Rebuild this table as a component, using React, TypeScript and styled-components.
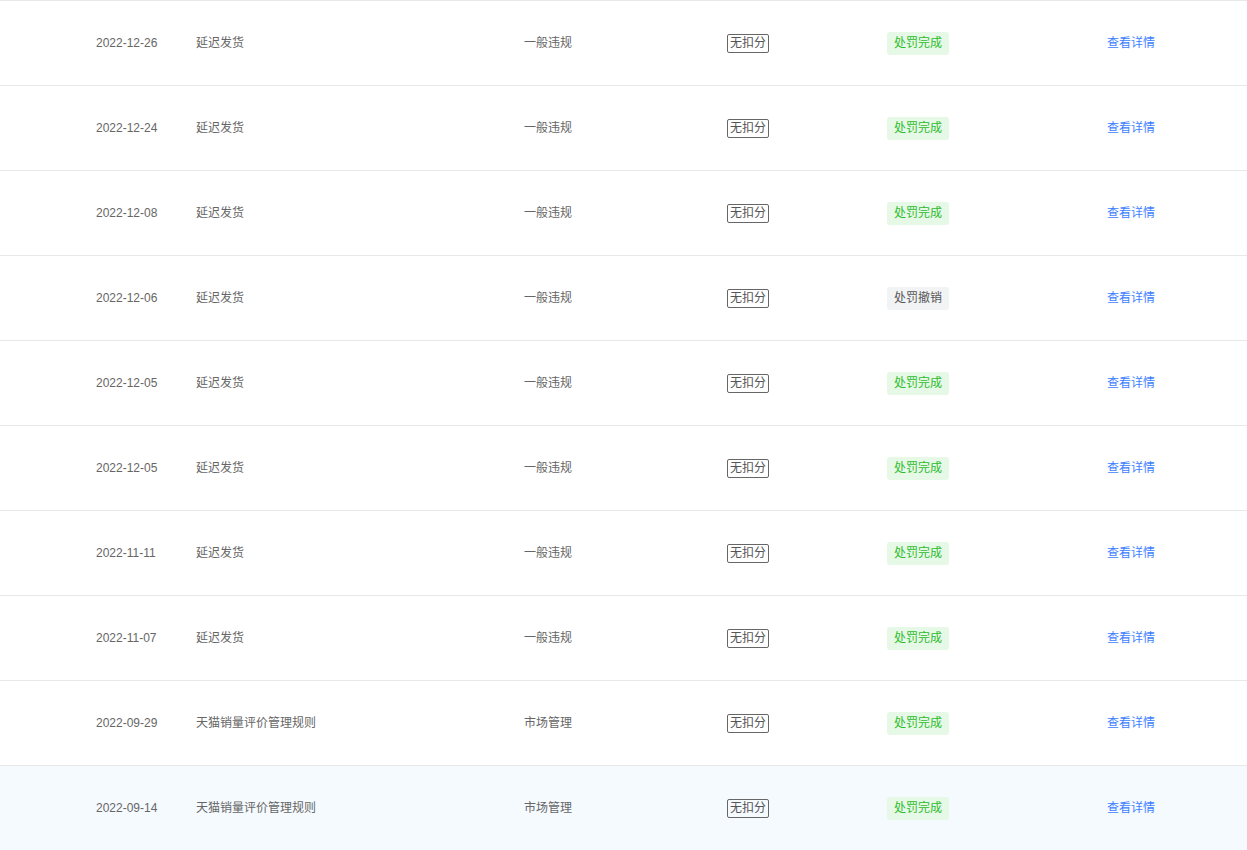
import React from "react";
import styled, { createGlobalStyle } from "styled-components";

const Global = createGlobalStyle`
  html, body { margin: 0; padding: 0; background: #fff; }
  body { font-family: "Liberation Sans", "Noto Sans CJK SC", sans-serif; font-size: 12px; color: #666; }
`;

const Table = styled.div`
  display: flex;
  flex-direction: column;
  width: 1247px;
`;

const Row = styled.div<{ $hl?: boolean }>`
  display: grid;
  grid-template-columns: 100px 328px 203px 160px 220px 1fr;
  align-items: center;
  height: 84px;
  border-top: 1px solid #e8e8e8;
  padding-left: 96px;
  background: ${(p) => (p.$hl ? "#f5faff" : "#fff")};
`;

const Cell = styled.div`
  color: #666;
  font-size: 12px;
  line-height: 20px;
  white-space: nowrap;
`;

const Tag = styled.span`
  display: inline-block;
  border: 1px solid #666;
  border-radius: 2px;
  padding: 0 2px;
  height: 17px;
  line-height: 17px;
  font-size: 12px;
  color: #555;
`;

const Status = styled.span<{ $done: boolean }>`
  display: inline-block;
  height: 23px;
  line-height: 23px;
  padding: 0 7px;
  border-radius: 3px;
  font-size: 12px;
  background: ${(p) => (p.$done ? "#e6f8e6" : "#f2f3f5")};
  color: ${(p) => (p.$done ? "#2dbb2d" : "#555")};
`;

const Link = styled.a`
  color: #3d7eff;
  font-size: 12px;
  text-decoration: none;
  cursor: pointer;
`;

const rows = [
  { d: "2022-12-26", t: "延迟发货", c: "一般违规", done: true },
  { d: "2022-12-24", t: "延迟发货", c: "一般违规", done: true },
  { d: "2022-12-08", t: "延迟发货", c: "一般违规", done: true },
  { d: "2022-12-06", t: "延迟发货", c: "一般违规", done: false },
  { d: "2022-12-05", t: "延迟发货", c: "一般违规", done: true },
  { d: "2022-12-05", t: "延迟发货", c: "一般违规", done: true },
  { d: "2022-11-11", t: "延迟发货", c: "一般违规", done: true },
  { d: "2022-11-07", t: "延迟发货", c: "一般违规", done: true },
  { d: "2022-09-29", t: "天猫销量评价管理规则", c: "市场管理", done: true },
  { d: "2022-09-14", t: "天猫销量评价管理规则", c: "市场管理", done: true },
];

export default function App() {
  return (
    <>
      <Global />
      <Table>
        {rows.map((r, i) => (
          <Row key={i} $hl={i === rows.length - 1}>
            <Cell>{r.d}</Cell>
            <Cell>{r.t}</Cell>
            <Cell>{r.c}</Cell>
            <Cell>
              <Tag>无扣分</Tag>
            </Cell>
            <Cell>
              <Status $done={r.done}>{r.done ? "处罚完成" : "处罚撤销"}</Status>
            </Cell>
            <Cell>
              <Link>查看详情</Link>
            </Cell>
          </Row>
        ))}
      </Table>
    </>
  );
}
